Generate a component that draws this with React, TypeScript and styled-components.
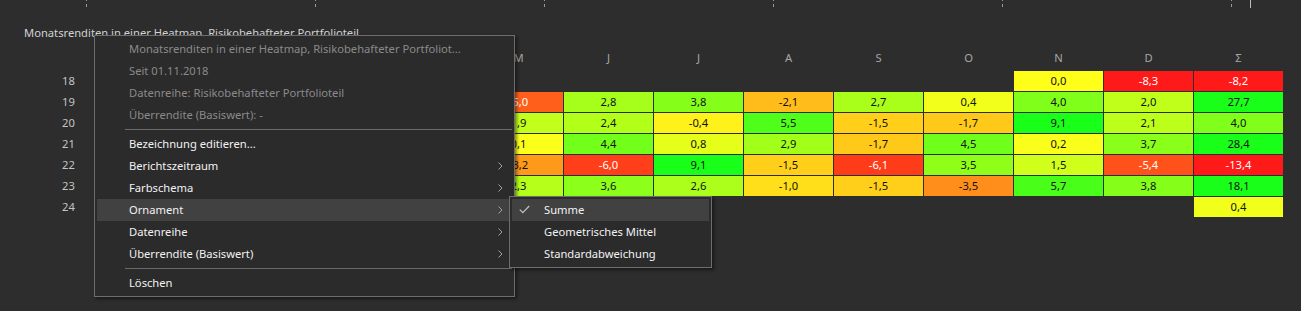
import React from "react";
import styled, { createGlobalStyle } from "styled-components";

const GlobalStyle = createGlobalStyle`
  html, body {
    margin: 0;
    padding: 0;
    background: #2d2d2d;
  }
  body {
    font-family: "Noto Sans", "Open Sans", sans-serif;
    font-size: 11.2px;
    color: #d0d0d0;
    overflow: hidden;
  }
`;

const Page = styled.div`
  position: relative;
  width: 1301px;
  height: 311px;
  background: #2d2d2d;
`;

const TickRow = styled.div`
  display: flex;
  height: 10px;
  padding-left: 86px;
`;

const Tick = styled.div<{ $w: number }>`
  width: ${(p) => p.$w}px;
  flex: none;
  display: flex;
  flex-direction: column;
  align-items: flex-start;
  &::before {
    content: "";
    width: 1px;
    height: 1px;
    background: #9a9a9a;
  }
  &::after {
    content: "";
    width: 1px;
    height: 3px;
    margin-top: 3px;
    background: #9a9a9a;
  }
`;

const AxisLine = styled.div`
  width: 1px;
  height: 8px;
  background: #bdbdbd;
`;

const Title = styled.div`
  margin: 15px 0 0 24px;
  height: 16px;
  line-height: 16px;
  color: #d2d2d2;
  white-space: nowrap;
`;

const Grid = styled.div`
  display: grid;
  grid-template-columns: repeat(14, 89px);
  column-gap: 1px;
  row-gap: 1px;
  margin-left: 24px;
  margin-top: 7px;
`;

const HeadCell = styled.div`
  height: 20px;
  line-height: 20px;
  text-align: center;
  color: #a6a6a6;
  margin-bottom: 2px;
`;

const RowLabel = styled.div`
  height: 20px;
  line-height: 20px;
  text-align: center;
  color: #c4c4c4;
`;

const Cell = styled.div<{ $bg: string; $fg: string }>`
  height: 20px;
  line-height: 20px;
  text-align: center;
  background: ${(p) => p.$bg};
  color: ${(p) => p.$fg};
`;

const Menu = styled.div`
  position: absolute;
  left: 94px;
  top: 35px;
  width: 421px;
  box-sizing: border-box;
  background: #2b2b2b;
  border: 1px solid #6e6e6e;
  padding: 2px;
  box-shadow: 2px 2px 3px rgba(0, 0, 0, 0.45);
  display: flex;
  flex-direction: column;
`;

const SubMenu = styled(Menu)`
  left: 509px;
  top: 196px;
  width: 203px;
`;

const Item = styled.div<{ $disabled?: boolean; $active?: boolean }>`
  position: relative;
  height: 22px;
  line-height: 22px;
  padding-left: 32px;
  white-space: nowrap;
  color: ${(p) => (p.$disabled ? "#8a8a8a" : "#f2f2f2")};
  background: ${(p) => (p.$active ? "#414141" : "transparent")};
  display: flex;
  align-items: center;
`;

const ItemText = styled.span`
  flex: 1;
`;

const Separator = styled.div`
  height: 1px;
  margin: 3px 0 3px 28px;
  background: #6a6a6a;
`;

const Chevron = styled.svg`
  width: 5px;
  height: 8px;
  margin-right: 9px;
  flex: none;
`;

const Check = styled.svg`
  position: absolute;
  left: 7px;
  top: 6px;
  width: 11px;
  height: 9px;
`;

const months = ["J", "F", "M", "A", "M", "J", "J", "A", "S", "O", "N", "D", "Σ"];

type Row = { year: string; values: (number | null)[] };

// Jan–Apr lie under the context menu and are not visible in the view.
const rows: Row[] = [
  { year: "18", values: [null, null, null, null, null, null, null, null, null, null, 0.0, -8.3, -8.2] },
  { year: "19", values: [null, null, null, null, -5.0, 2.8, 3.8, -2.1, 2.7, 0.4, 4.0, 2.0, 27.7] },
  { year: "20", values: [null, null, null, null, 1.9, 2.4, -0.4, 5.5, -1.5, -1.7, 9.1, 2.1, 4.0] },
  { year: "21", values: [null, null, null, null, 0.1, 4.4, 0.8, 2.9, -1.7, 4.5, 0.2, 3.7, 28.4] },
  { year: "22", values: [null, null, null, null, -3.2, -6.0, 9.1, -1.5, -6.1, 3.5, 1.5, -5.4, -13.4] },
  { year: "23", values: [null, null, null, null, 2.3, 3.6, 2.6, -1.0, -1.5, -3.5, 5.7, 3.8, 18.1] },
  { year: "24", values: [null, null, null, null, null, null, null, null, null, null, null, null, 0.4] },
];

const clamp = (n: number, lo: number, hi: number) => Math.max(lo, Math.min(hi, n));

function heat(v: number): { bg: string; fg: string } {
  const r = v > 0 ? clamp(255 - 32 * v, 26, 255) : 255;
  const g = v < 0 ? clamp(255 + 32 * v, 26, 255) : 255;
  const red = v < 0 && g < 110;
  return {
    bg: `rgb(${Math.round(r)}, ${Math.round(g)}, 26)`,
    fg: red ? "#ffffff" : "#111111",
  };
}

const fmt = (v: number) => v.toFixed(1).replace(".", ",");

const ChevronIcon = () => (
  <Chevron viewBox="0 0 5 8">
    <polyline points="0.5,0.5 4,4 0.5,7.5" fill="none" stroke="#a0a0a0" strokeWidth="1" />
  </Chevron>
);

const tickWidths = [229, 229, 229, 229, 229, 19];

export default function App() {
  return (
    <Page>
      <GlobalStyle />
      <TickRow>
        {tickWidths.map((w, i) => (
          <Tick key={i} $w={w} />
        ))}
        <AxisLine />
      </TickRow>
      <Title>Monatsrenditen in einer Heatmap, Risikobehafteter Portfolioteil</Title>
      <Grid>
        <HeadCell />
        {months.map((m, i) => (
          <HeadCell key={i}>{m}</HeadCell>
        ))}
        {rows.map((row) => (
          <React.Fragment key={row.year}>
            <RowLabel>{row.year}</RowLabel>
            {row.values.map((v, i) => {
              if (v === null) return <Cell key={i} $bg="transparent" $fg="transparent" />;
              const c = heat(v);
              return (
                <Cell key={i} $bg={c.bg} $fg={c.fg}>
                  {fmt(v)}
                </Cell>
              );
            })}
          </React.Fragment>
        ))}
      </Grid>

      <Menu>
        <Item $disabled>
          <ItemText>Monatsrenditen in einer Heatmap, Risikobehafteter Portfoliot...</ItemText>
        </Item>
        <Item $disabled>
          <ItemText>Seit 01.11.2018</ItemText>
        </Item>
        <Item $disabled>
          <ItemText>Datenreihe: Risikobehafteter Portfolioteil</ItemText>
        </Item>
        <Item $disabled>
          <ItemText>Überrendite (Basiswert): -</ItemText>
        </Item>
        <Separator />
        <Item>
          <ItemText>Bezeichnung editieren...</ItemText>
        </Item>
        <Item>
          <ItemText>Berichtszeitraum</ItemText>
          <ChevronIcon />
        </Item>
        <Item>
          <ItemText>Farbschema</ItemText>
          <ChevronIcon />
        </Item>
        <Item $active>
          <ItemText>Ornament</ItemText>
          <ChevronIcon />
        </Item>
        <Item>
          <ItemText>Datenreihe</ItemText>
          <ChevronIcon />
        </Item>
        <Item>
          <ItemText>Überrendite (Basiswert)</ItemText>
          <ChevronIcon />
        </Item>
        <Separator />
        <Item>
          <ItemText>Löschen</ItemText>
        </Item>
      </Menu>

      <SubMenu>
        <Item $active>
          <Check viewBox="0 0 11 9">
            <polyline points="0.8,4.6 3.8,7.6 10.2,1" fill="none" stroke="#bdbdbd" strokeWidth="1.3" />
          </Check>
          <ItemText>Summe</ItemText>
        </Item>
        <Item>
          <ItemText>Geometrisches Mittel</ItemText>
        </Item>
        <Item>
          <ItemText>Standardabweichung</ItemText>
        </Item>
      </SubMenu>
    </Page>
  );
}
